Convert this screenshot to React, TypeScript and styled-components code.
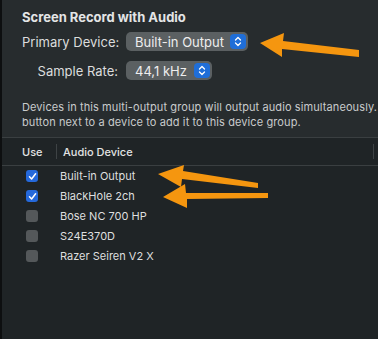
import React from "react";
import styled, { createGlobalStyle } from "styled-components";

const GlobalStyle = createGlobalStyle`
  html, body {
    margin: 0;
    padding: 0;
    background: #1f2426;
  }
  body {
    font-family: Inter, "Liberation Sans", Arial, sans-serif;
    -webkit-font-smoothing: antialiased;
  }
`;

const Window = styled.div`
  position: relative;
  width: 378px;
  height: 339px;
  overflow: hidden;
  box-sizing: border-box;
  border-left: 2px solid #0d0f10;
  background: #1f2426;
  display: flex;
  flex-direction: column;
`;

const TopPane = styled.div`
  background: #272c2e;
  padding: 9px 0 7px 20px;
  border-bottom: 1px solid #3a3f41;
`;

const Title = styled.div`
  font-size: 13px;
  line-height: 16px;
  font-weight: 700;
  color: #e4e5e6;
  white-space: nowrap;
`;

const Form = styled.div`
  margin-top: 7px;
  display: grid;
  grid-template-columns: 96px auto;
  column-gap: 8px;
  row-gap: 10px;
  justify-content: start;
  align-items: center;
`;

const Label = styled.div`
  font-size: 13px;
  color: #dcdddd;
  text-align: right;
  white-space: nowrap;
`;

const Popup = styled.div<{ $width: number }>`
  width: ${(p) => p.$width}px;
  height: 19px;
  box-sizing: border-box;
  border-radius: 5px;
  background: #5b6062;
  display: flex;
  align-items: center;
  justify-content: space-between;
  padding: 0 2px 0 9px;
  font-size: 13px;
  color: #eeeeee;
  white-space: nowrap;
  justify-self: start;
`;

const Stepper = styled.div`
  width: 16px;
  height: 15px;
  border-radius: 4px;
  background: #1f6ed8;
  display: flex;
  align-items: center;
  justify-content: center;
`;

const Description = styled.div`
  margin-top: 20px;
  font-size: 11px;
  line-height: 15px;
  letter-spacing: 0.1px;
  color: #c9cbcc;
  white-space: nowrap;
`;

const Table = styled.div`
  display: flex;
  flex-direction: column;
`;

const HeaderRow = styled.div`
  height: 27px;
  display: flex;
  align-items: center;
  border-bottom: 1px solid #3a3f41;
  font-size: 11px;
  font-weight: 500;
  color: #e2e3e3;
`;

const HeaderCell = styled.div<{ $width?: number }>`
  height: 15px;
  display: flex;
  align-items: center;
  box-sizing: border-box;
  ${(p) => (p.$width ? `width: ${p.$width}px;` : "flex: 1; margin-right: 4px;")}
  padding-left: 6px;
  border-right: 1px solid #3e4345;
  &:first-child {
    padding-left: 20px;
  }
`;

const Row = styled.div`
  height: 20px;
  display: flex;
  align-items: center;
  font-size: 11px;
  color: #dedfdf;
`;

const CheckCell = styled.div`
  width: 58px;
  padding-left: 24px;
  box-sizing: border-box;
  display: flex;
  align-items: center;
`;

const Box = styled.div<{ $on: boolean }>`
  width: 12px;
  height: 12px;
  border-radius: 3px;
  background: ${(p) => (p.$on ? "#2569db" : "#54585a")};
  display: flex;
  align-items: center;
  justify-content: center;
`;

const Overlay = styled.svg`
  position: absolute;
  left: 0;
  top: 0;
  pointer-events: none;
`;

const StepIcon = () => (
  <svg width="8" height="11" viewBox="0 0 8 11">
    <path d="M1.5 4 L4 1.5 L6.5 4 M1.5 7 L4 9.5 L6.5 7" fill="none" stroke="#fff" strokeWidth="1.3" strokeLinecap="round" strokeLinejoin="round" />
  </svg>
);

const Check = () => (
  <svg width="9" height="9" viewBox="0 0 9 9">
    <path d="M1.5 4.8 L3.6 7 L7.6 1.8" fill="none" stroke="#fff" strokeWidth="1.5" strokeLinecap="round" strokeLinejoin="round" />
  </svg>
);

const devices = [
  { name: "Built-in Output", on: true },
  { name: "BlackHole 2ch", on: true },
  { name: "Bose NC 700 HP", on: false },
  { name: "S24E370D", on: false },
  { name: "Razer Seiren V2 X", on: false },
];

const orange = "#f5960f";

export default function App() {
  return (
    <Window>
      <GlobalStyle />
      <TopPane>
        <Title>Screen Record with Audio</Title>
        <Form>
          <Label>Primary Device:</Label>
          <Popup $width={122}>
            Built-in Output
            <Stepper><StepIcon /></Stepper>
          </Popup>
          <Label>Sample Rate:</Label>
          <Popup $width={86}>
            44,1 kHz
            <Stepper><StepIcon /></Stepper>
          </Popup>
        </Form>
        <Description>
          Devices in this multi-output group will output audio simultaneously.
          <br />
          button next to a device to add it to this device group.
        </Description>
      </TopPane>
      <Table>
        <HeaderRow>
          <HeaderCell $width={55}>Use</HeaderCell>
          <HeaderCell>Audio Device</HeaderCell>
        </HeaderRow>
        {devices.map((d) => (
          <Row key={d.name}>
            <CheckCell>
              <Box $on={d.on}>{d.on && <Check />}</Box>
            </CheckCell>
            {d.name}
          </Row>
        ))}
      </Table>
      <Overlay width="378" height="339" viewBox="0 0 378 339">
        <polygon points="258,43 282,33 281,41 357,50 357,57 280,49 280,57" fill={orange} />
        <polygon points="156,174 182,165 181,171 256,183 256,188 180,179 179,187" fill={orange} />
        <polygon points="161,197 183,184 184,193 266,193 266,198 185,199 185,208" fill={orange} />
      </Overlay>
    </Window>
  );
}
